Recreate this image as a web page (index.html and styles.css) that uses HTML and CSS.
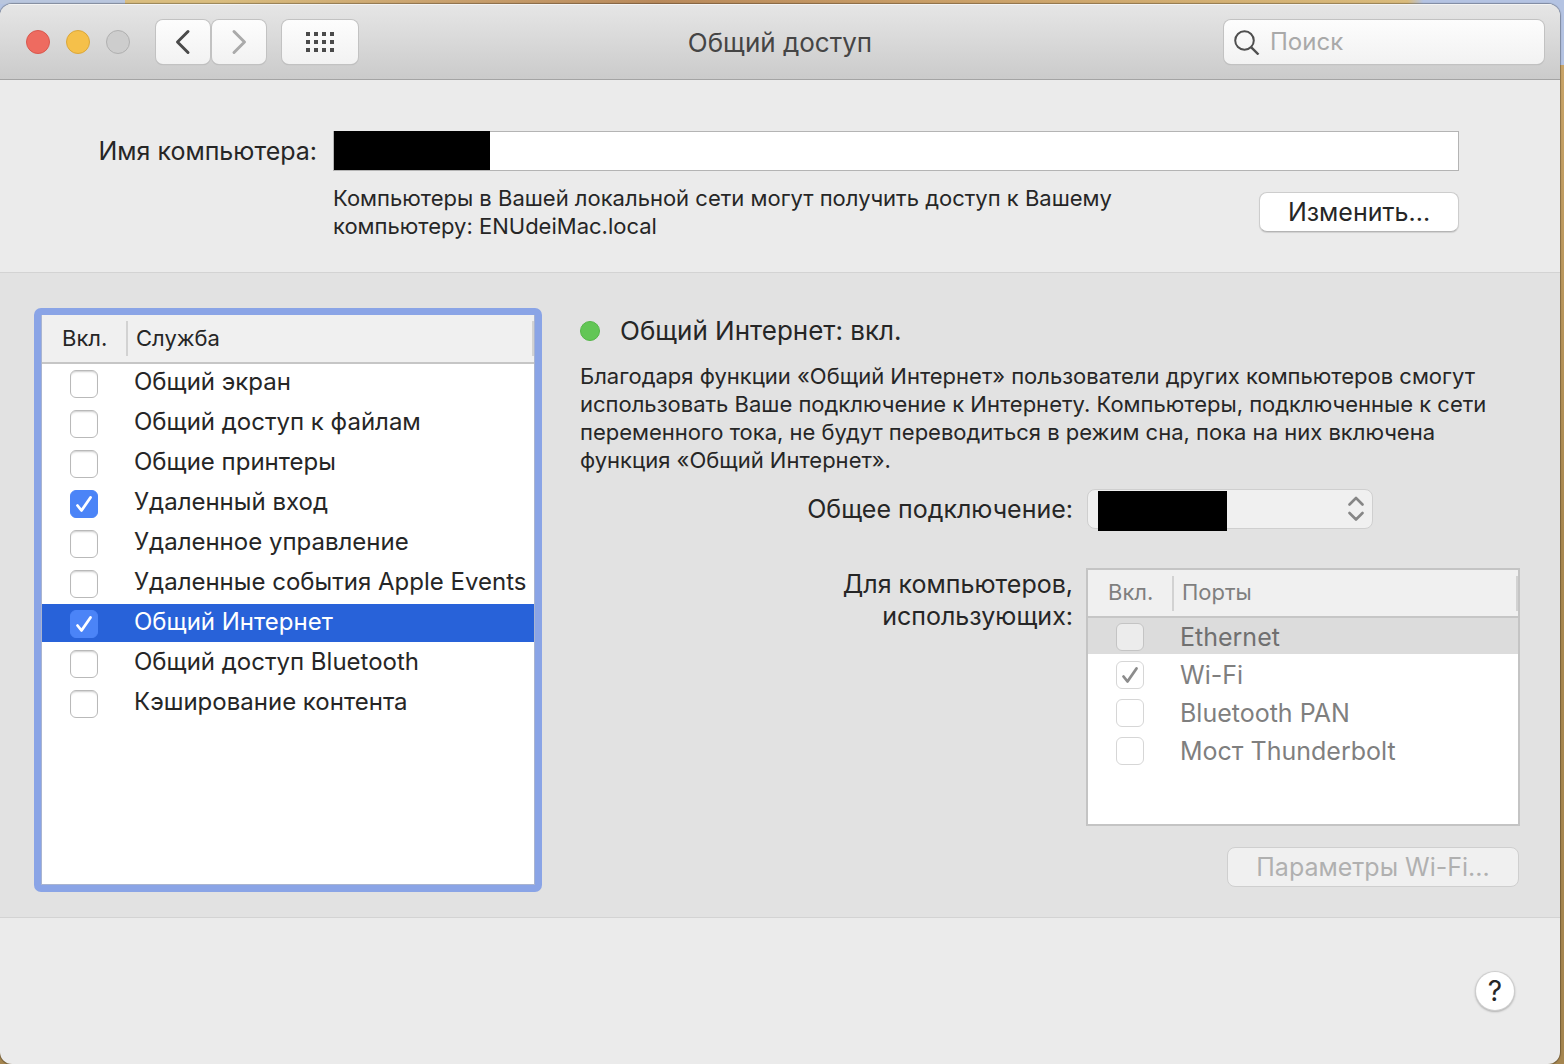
FILE: index.html
```html
<!DOCTYPE html>
<html lang="ru">
<head>
<meta charset="utf-8">
<meta name="viewport" content="width=device-width, initial-scale=1">
<title>Общий доступ</title>
<link rel="stylesheet" href="styles.css">
</head>
<body>
<svg class="defs" aria-hidden="true">
  <symbol id="tick" viewBox="0 0 28 28"><path d="M7.5 15.5 L11.5 20.5 L20.5 7.5" fill="none" stroke="currentColor" stroke-width="2.8" stroke-linecap="round" stroke-linejoin="round"/></symbol>
</svg>
<div class="window">
  <header class="titlebar">
    <div class="titlebar-left">
      <div class="lights">
        <button class="light light-close" aria-label="Закрыть"></button>
        <button class="light light-min" aria-label="Свернуть"></button>
        <button class="light light-zoom" aria-label="Развернуть" disabled></button>
      </div>
      <div class="nav">
        <button class="tool" aria-label="Назад"><svg width="16" height="26" viewBox="0 0 16 26"><path d="M13 2.5 L2.5 13 L13 23.5" fill="none" stroke="#4a4a4a" stroke-width="3" stroke-linecap="round" stroke-linejoin="round"/></svg></button>
        <button class="tool" aria-label="Вперед" disabled><svg width="16" height="26" viewBox="0 0 16 26"><path d="M3 2.5 L13.5 13 L3 23.5" fill="none" stroke="#aaa" stroke-width="3" stroke-linecap="round" stroke-linejoin="round"/></svg></button>
      </div>
      <button class="tool tool-grid" aria-label="Показать все"><svg width="28" height="20" viewBox="0 0 28 20" fill="#4a4a4a"><path d="M0 0h4v4h-4zM8 0h4v4h-4zM16 0h4v4h-4zM24 0h4v4h-4zM0 8h4v4h-4zM8 8h4v4h-4zM16 8h4v4h-4zM24 8h4v4h-4zM0 16h4v4h-4zM8 16h4v4h-4zM16 16h4v4h-4zM24 16h4v4h-4z"/></svg></button>
    </div>
    <h1 class="title">Общий доступ</h1>
    <label class="search">
      <svg width="26" height="26" viewBox="0 0 26 26" fill="none" stroke="#4f4f4f" stroke-width="2"><circle cx="10.5" cy="11.5" r="9.3"/><path d="M17.3 18.3 L24.5 25.5" stroke-width="2.4"/></svg>
      <input class="search-input" type="search" placeholder="Поиск" aria-label="Поиск">
    </label>
  </header>

  <section class="identity">
    <label class="identity-label" for="name">Имя компьютера:</label>
    <div class="name-field">
      <input class="name-input" id="name" type="text">
      <span class="redacted redacted-name"></span>
    </div>
    <div class="identity-row">
      <p class="note">Компьютеры в Вашей локальной сети могут получить доступ к Вашему<br>компьютеру: ENUdeiMac.local</p>
      <button class="button button-edit">Изменить...</button>
    </div>
  </section>

  <main class="panel">
    <div class="services">
      <table class="list">
        <thead><tr><th class="col-on">Вкл.</th><th class="col-name">Служба</th></tr></thead>
        <tbody>
          <tr><td><span class="check"><input type="checkbox" id="s1"><svg><use href="#tick"/></svg></span></td><td><label for="s1">Общий экран</label></td></tr>
          <tr><td><span class="check"><input type="checkbox" id="s2"><svg><use href="#tick"/></svg></span></td><td><label for="s2">Общий доступ к файлам</label></td></tr>
          <tr><td><span class="check"><input type="checkbox" id="s3"><svg><use href="#tick"/></svg></span></td><td><label for="s3">Общие принтеры</label></td></tr>
          <tr><td><span class="check"><input type="checkbox" id="s4" checked><svg><use href="#tick"/></svg></span></td><td><label for="s4">Удаленный вход</label></td></tr>
          <tr><td><span class="check"><input type="checkbox" id="s5"><svg><use href="#tick"/></svg></span></td><td><label for="s5">Удаленное управление</label></td></tr>
          <tr><td><span class="check"><input type="checkbox" id="s6"><svg><use href="#tick"/></svg></span></td><td><label for="s6">Удаленные события Apple Events</label></td></tr>
          <tr class="selected"><td><span class="check"><input type="checkbox" id="s7" checked><svg><use href="#tick"/></svg></span></td><td><label for="s7">Общий Интернет</label></td></tr>
          <tr><td><span class="check"><input type="checkbox" id="s8"><svg><use href="#tick"/></svg></span></td><td><label for="s8">Общий доступ Bluetooth</label></td></tr>
          <tr><td><span class="check"><input type="checkbox" id="s9"><svg><use href="#tick"/></svg></span></td><td><label for="s9">Кэширование контента</label></td></tr>
        </tbody>
      </table>
    </div>

    <section class="detail">
      <h2 class="status"><span class="dot"></span>Общий Интернет: вкл.</h2>
      <p class="note">Благодаря функции «Общий Интернет» пользователи других компьютеров смогут<br>использовать Ваше подключение к Интернету. Компьютеры, подключенные к сети<br>переменного тока, не будут переводиться в режим сна, пока на них включена<br>функция «Общий Интернет».</p>
      <div class="form">
        <label class="form-label" for="source">Общее подключение:</label>
        <div class="popup">
          <select class="popup-select" id="source" disabled><option></option></select>
          <svg class="popup-arrows" width="16" height="26" viewBox="0 0 16 26" fill="none" stroke="#868686" stroke-width="2.6" stroke-linecap="round" stroke-linejoin="round"><path d="M1.5 8.5 L8 2 L14.5 8.5M1.5 17 L8 23.5 L14.5 17"/></svg>
          <span class="redacted redacted-source"></span>
        </div>
        <p class="form-label">Для компьютеров,<br>использующих:</p>
        <div class="ports">
          <table class="list">
            <thead><tr><th class="col-on">Вкл.</th><th class="col-name">Порты</th></tr></thead>
            <tbody>
              <tr class="selected"><td><span class="check"><input type="checkbox" id="p1" disabled><svg><use href="#tick"/></svg></span></td><td><label for="p1">Ethernet</label></td></tr>
              <tr><td><span class="check"><input type="checkbox" id="p2" checked disabled><svg><use href="#tick"/></svg></span></td><td><label for="p2">Wi-Fi</label></td></tr>
              <tr><td><span class="check"><input type="checkbox" id="p3" disabled><svg><use href="#tick"/></svg></span></td><td><label for="p3">Bluetooth PAN</label></td></tr>
              <tr><td><span class="check"><input type="checkbox" id="p4" disabled><svg><use href="#tick"/></svg></span></td><td><label for="p4">Мост Thunderbolt</label></td></tr>
            </tbody>
          </table>
        </div>
      </div>
      <button class="button button-wifi" disabled>Параметры Wi-Fi...</button>
    </section>
  </main>

  <footer class="footer"><button class="help" aria-label="Справка">?</button></footer>
</div>
</body>
</html>
```

FILE: styles.css
```css
* { box-sizing: border-box; }

body {
  margin: 0;
  min-height: 100vh;
  display: flex;
  padding: 4px 4px 0 0;
  font: 25px/32px Inter, "Liberation Sans", sans-serif;
  color: #262626;
  background:
    linear-gradient(90deg, #b9c6de 0 8%, #d9bd7f 8% 14%, #c9a26f 28%, #b98a5c 42%, #c99f68 60%, #d9bb7c 90%, #b4c3e2 91%) 0 0 / 100% 4px no-repeat,
    linear-gradient(#b4c3e2 0 65px, #c9a468 65px, #a98850 50%, #a5854f);
}

h1, h2, p { margin: 0; font-weight: 400; font-size: inherit; }
button, input, select { font: inherit; color: inherit; margin: 0; padding: 0; border: 0; }
button { display: grid; place-items: center; }

.defs { position: absolute; width: 0; height: 0; }

.window {
  flex: 1;
  display: flex;
  flex-direction: column;
  background: #ebebeb;
  border-radius: 12px;
  overflow: hidden;
  box-shadow: 0 0 1px 1px rgba(0, 0, 0, .3);
}

/* Title bar */
.titlebar {
  height: 76px;
  display: grid;
  grid-template-columns: 1fr auto 1fr;
  align-items: center;
  padding: 0 16px;
  background: linear-gradient(#e6e6e6, #cbcbcb);
  border-bottom: 1px solid #a4a4a4;
  box-shadow: inset 0 1px #f4f4f4;
}
.titlebar-left { display: flex; align-items: center; gap: 16px; }
.lights { display: flex; gap: 16px; margin: 0 10px; }
.light { width: 24px; height: 24px; border-radius: 50%; border: 1px solid; }
.light-close { background: #ee6b60; border-color: #d9584e; }
.light-min { background: #f5c04a; border-color: #dba73a; }
.light-zoom { background: #cdcdcd; border-color: #b0b0b0; }
.nav { display: flex; gap: 2px; }
.tool, .search {
  height: 44px;
  border-radius: 7px;
  background: linear-gradient(#fdfdfd, #f2f2f2);
  box-shadow: 0 0 0 1px #c2c2c2, 0 1px 1px #ababab;
}
.tool { width: 54px; }
.tool-grid { width: 76px; }
.title { padding-top: 2px; font-size: 26px; color: #454545; }
.search {
  justify-self: end;
  width: 320px;
  display: flex;
  align-items: center;
  gap: 10px;
  padding: 0 10px;
}
.search-input { flex: 1; min-width: 0; background: none; outline: none; font-size: 24px; }
.search-input::placeholder { color: #a9a9a9; opacity: 1; }

/* Computer name */
.identity {
  display: grid;
  grid-template-columns: 232px 1fr;
  gap: 13px 16px;
  align-items: center;
  padding: 51px 101px 32px 85px;
}
.identity-label { text-align: right; }
.name-field { position: relative; display: flex; }
.name-input {
  flex: 1;
  height: 40px;
  padding: 0 8px;
  background: #fff;
  border: 1px solid #b4b4b4;
}
.redacted { position: absolute; background: #000; }
.redacted-name { left: 1px; top: 0; width: 156px; height: 39px; }
.identity-row { grid-column: 2; display: flex; justify-content: space-between; align-items: center; }
.note { font-size: 22px; line-height: 28px; white-space: nowrap; }

.button {
  height: 40px;
  border-radius: 8px;
  background: #fff;
  border: 1px solid #cdcdcd;
  border-bottom-color: #b4b4b4;
  box-shadow: 0 1px 1px #d0d0d0;
}
.button-edit { width: 200px; }
.button:disabled { color: #b0b0b0; background: #f0f0f0; border-color: #cfcfcf; box-shadow: none; }

/* Settings panel */
.panel {
  display: flex;
  gap: 38px;
  padding: 35px 40px 25px 34px;
  background: #e2e2e2;
  border: solid #d3d3d3;
  border-width: 1px 0;
}
.services {
  flex: none;
  width: 508px;
  min-height: 584px;
  border: 7px solid #8aa4e6;
  border-radius: 7px;
  background: #fff;
  box-shadow: inset 0 0 0 1px #a9b4d0;
  padding: 0 1px;
}
.list { width: 100%; border-collapse: separate; border-spacing: 0; table-layout: fixed; }
.list th {
  position: relative;
  height: 49px;
  padding: 0 0 2px 8px;
  font-size: 22px;
  font-weight: 400;
  text-align: left;
  background: #f0f0f0;
  border-bottom: 2px solid #c6c6c6;
}
.list th::after {
  content: "";
  position: absolute;
  right: 0;
  top: 6px;
  width: 2px;
  height: 35px;
  background: #d2d2d2;
}
.list .col-on { width: 86px; padding-left: 20px; }
.list td {
  height: 40px;
  padding: 0;
  border-bottom: 2px solid transparent;
  background-clip: padding-box;
  white-space: nowrap;
}
.list td:last-child { padding-left: 6px; }
.list label { display: block; }
.services td { font-size: 24px; padding-bottom: 2px; }
.services td:first-child { padding: 2px 0 0 28px; }
.services .selected td { background-color: #2862d9; color: #fff; }

.check { display: grid; width: 28px; height: 28px; }
.check > * { grid-area: 1 / 1; width: 28px; height: 28px; }
.check input {
  appearance: none;
  border: 1px solid #b9b9b9;
  border-radius: 6px;
  background: #fff;
  box-shadow: inset 0 2px 2px -1px #ccc;
}
.check svg { visibility: hidden; color: #fff; pointer-events: none; }
.check input:checked + svg { visibility: visible; }
.check input:checked:enabled { background: #4b84f7; border-color: #4b84f7; box-shadow: none; }
.check input:disabled { border-color: #d6d6d6; box-shadow: none; }
.check input:disabled + svg { color: #8c8c8c; }

/* Service details */
.detail { flex: 1; min-width: 0; display: flex; flex-direction: column; }
.status { display: flex; align-items: center; gap: 20px; margin: 7px 0 15px; font-size: 26px; }
.dot { width: 20px; height: 20px; border-radius: 50%; background: #62c655; border: 1px solid #55b649; }
.form {
  display: grid;
  grid-template-columns: 1fr 434px;
  gap: 39px 13px;
  margin-top: 15px;
}
.form-label { text-align: right; }
label.form-label { align-self: center; }
.popup { position: relative; width: 287px; padding-left: 1px; display: flex; }
.popup-select {
  appearance: none;
  flex: 1;
  height: 40px;
  border: 1px solid #cfcfcf;
  border-radius: 8px;
  background: #f0f0f0;
  opacity: 1;
}
.popup-arrows { position: absolute; right: 9px; top: 7px; }
.redacted-source { left: 12px; top: 2px; width: 129px; height: 40px; }
.ports { min-height: 258px; border: 2px solid #c4c4c4; background: #fff; color: #7f7f7f; }
.ports th { height: 48px; }
.ports td { height: 38px; padding-top: 2px; }
.ports td:first-child { padding-left: 28px; }
.ports .selected td { background-color: #dcdcdc; color: #707070; }
.ports .selected input { background: #ececec; border-color: #c4c4c4; }
.button-wifi { align-self: flex-end; width: 292px; margin: 21px 1px 0 0; }

.footer { flex: 1; display: flex; justify-content: flex-end; align-items: flex-start; padding: 54px 46px 52px; }
.help {
  width: 38px;
  height: 38px;
  border-radius: 50%;
  background: #fff;
  font-size: 28px;
  box-shadow: 0 0 0 1px #cfcfcf, 0 1px 2px 1px #b0b0b0;
}
```
